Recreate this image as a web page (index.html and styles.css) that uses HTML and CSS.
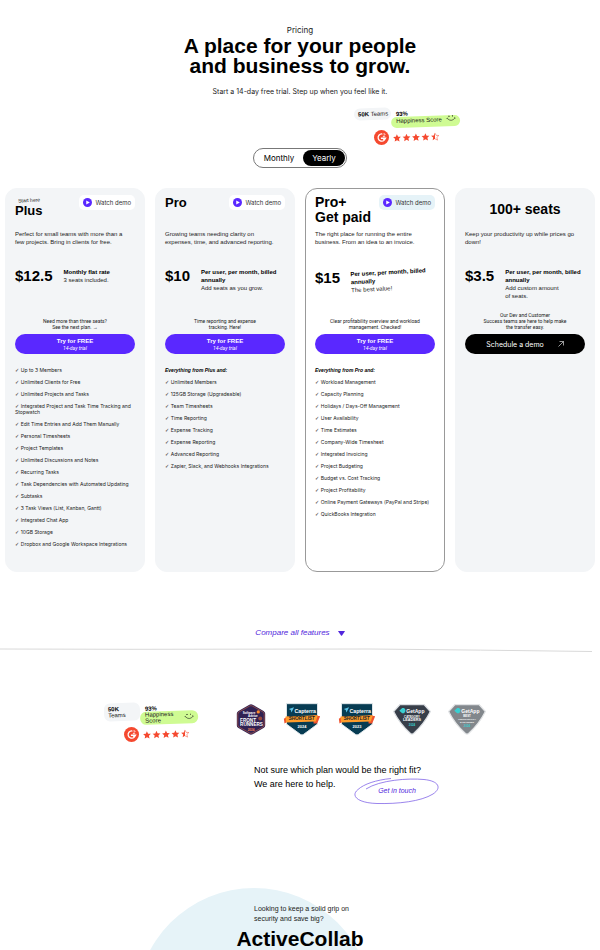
FILE: index.html
```html
<!DOCTYPE html>
<html lang="en">
<head>
  <meta charset="UTF-8">
  <meta name="viewport" content="width=device-width, initial-scale=1">
  <title>Pricing</title>
  <link rel="stylesheet" href="styles.css">
</head>
<body>

  <!-- shared icons -->
  <svg class="sprite" aria-hidden="true">
    <symbol id="play" viewBox="0 0 18 18">
      <circle cx="9" cy="9" r="9" fill="#5a28ff"/>
      <path d="M6.500 4.800v8.400L13.600 9z" fill="#fff"/>
    </symbol>
    <symbol id="g2" viewBox="0 0 30 30">
      <circle cx="15" cy="15" r="15" fill="#f5492f"/>
      <path d="M16.500 8A7.200 7.200 0 1 0 20.500 20.200L18 16.500H13.800M20.500 20.200L23 16.500H18" fill="none" stroke="#fff" stroke-width="2.600"/>
      <path d="M18.200 8.600c.6-1.800 4-1.600 3.800.4-.1 1.500-3.600 2.300-3.600 4.300h4" fill="none" stroke="#fff" stroke-width="1.500"/>
    </symbol>
    <symbol id="stars" viewBox="0 0 94 18">
      <g fill="#f5492f">
        <path id="star" d="M8 1l2.300 5 5.500.6-4.100 3.700 1.200 5.400L8 13l-4.900 2.700 1.200-5.400L.2 6.600 5.700 6z"/>
        <use href="#star" x="19"/>
        <use href="#star" x="38"/>
        <use href="#star" x="57"/>
      </g>
      <path d="M84 1v12l-4.900 2.700 1.200-5.400-4.100-3.700 5.500-.6z" fill="#f5492f"/>
      <path d="M84 1l2.300 5 5.500.6-4.100 3.700 1.200 5.400L84 13" fill="none" stroke="#f5492f" stroke-width="1"/>
    </symbol>
    <symbol id="smile" viewBox="0 0 20 14">
      <circle cx="6" cy="2" r="1.200"/>
      <circle cx="13" cy="1.500" r="1.200"/>
      <path d="M2 6q8 9 16 0M1 7l2-2M16.500 4.500l2.500 2" fill="none" stroke="#222" stroke-width="1.200"/>
    </symbol>
  </svg>

  <header class="intro">
    <p class="eyebrow">Pricing</p>
    <h1>A place for your people<br>and business to grow.</h1>
    <p class="lead">Start a 14-day free trial. Step up when you feel like it.</p>
  </header>

  <div class="score score-top">
    <div class="score-row">
      <p class="teams"><b>50K</b> Teams</p>
      <div class="happiness">
        <b>93%</b>
        <p>Happiness Score <svg class="smile"><use href="#smile"/></svg></p>
      </div>
    </div>
    <div class="rating">
      <svg class="g2"><use href="#g2"/></svg>
      <svg class="stars"><use href="#stars"/></svg>
    </div>
  </div>

  <form class="billing">
    <input type="radio" name="period" id="monthly">
    <label for="monthly">Monthly</label>
    <input type="radio" name="period" id="yearly" checked>
    <label for="yearly">Yearly</label>
  </form>

  <main class="plans">
    <section class="plan">
      <div class="plan-head">
        <div>
          <span class="start">Start here</span>
          <h2>Plus</h2>
        </div>
        <button class="watch"><svg><use href="#play"/></svg>Watch demo</button>
      </div>
      <p class="about">Perfect for small teams with more than a<br>few projects. Bring in clients for free.</p>
      <div class="price">
        <strong>$12.5</strong>
        <p><b>Monthly flat rate</b><br>3 seats included.</p>
      </div>
      <p class="note">Need more than three seats?<br>See the next plan. →</p>
      <button class="try">Try for FREE<small>14-day trial</small></button>
      <ul>
        <li>Up to 3 Members</li>
        <li>Unlimited Clients for Free</li>
        <li>Unlimited Projects and Tasks</li>
        <li>Integrated Project and Task Time Tracking and Stopwatch</li>
        <li>Edit Time Entries and Add Them Manually</li>
        <li>Personal Timesheets</li>
        <li>Project Templates</li>
        <li>Unlimited Discussions and Notes</li>
        <li>Recurring Tasks</li>
        <li>Task Dependencies with Automated Updating</li>
        <li>Subtasks</li>
        <li>3 Task Views (List, Kanban, Gantt)</li>
        <li>Integrated Chat App</li>
        <li>10GB Storage</li>
        <li>Dropbox and Google Workspace Integrations</li>
      </ul>
    </section>

    <section class="plan">
      <div class="plan-head">
        <h2>Pro</h2>
        <button class="watch"><svg><use href="#play"/></svg>Watch demo</button>
      </div>
      <p class="about">Growing teams needing clarity on<br>expenses, time, and advanced reporting.</p>
      <div class="price">
        <strong>$10</strong>
        <p><b>Per user, per month, billed annually</b><br>Add seats as you grow.</p>
      </div>
      <p class="note">Time reporting and expense<br>tracking. Here!</p>
      <button class="try">Try for FREE<small>14-day trial</small></button>
      <h3>Everything from Plus and:</h3>
      <ul>
        <li>Unlimited Members</li>
        <li>125GB Storage (Upgradeable)</li>
        <li>Team Timesheets</li>
        <li>Time Reporting</li>
        <li>Expense Tracking</li>
        <li>Expense Reporting</li>
        <li>Advanced Reporting</li>
        <li>Zapier, Slack, and Webhooks Integrations</li>
      </ul>
    </section>

    <section class="plan featured">
      <div class="plan-head">
        <h2>Pro+<br>Get paid</h2>
        <button class="watch"><svg><use href="#play"/></svg>Watch demo</button>
      </div>
      <p class="about">The right place for running the entire<br>business. From an idea to an invoice.</p>
      <div class="price">
        <strong>$15</strong>
        <p><b>Per user, per month, billed annually</b><br>The best value!</p>
      </div>
      <p class="note">Clear profitability overview and workload<br>management. Checked!</p>
      <button class="try">Try for FREE<small>14-day trial</small></button>
      <h3>Everything from Pro and:</h3>
      <ul>
        <li>Workload Management</li>
        <li>Capacity Planning</li>
        <li>Holidays / Days-Off Management</li>
        <li>User Availability</li>
        <li>Time Estimates</li>
        <li>Company-Wide Timesheet</li>
        <li>Integrated Invoicing</li>
        <li>Project Budgeting</li>
        <li>Budget vs. Cost Tracking</li>
        <li>Project Profitability</li>
        <li>Online Payment Gateways (PayPal and Stripe)</li>
        <li>QuickBooks Integration</li>
      </ul>
    </section>

    <section class="plan seats">
      <div class="plan-head">
        <h2>100+ seats</h2>
      </div>
      <p class="about">Keep your productivity up while prices go<br>down!</p>
      <div class="price">
        <strong>$3.5</strong>
        <p><b>Per user, per month, billed annually</b><br>Add custom amount<br>of seats.</p>
      </div>
      <p class="note">Our Dev and Customer<br>Success teams are here to help make<br>the transfer easy.</p>
      <button class="try demo">Schedule a demo
        <svg viewBox="0 0 12 12"><path d="M1 11L11 1M3 1h8v8" fill="none" stroke="#fff" stroke-width="1.200"/></svg>
      </button>
    </section>
  </main>

  <div class="compare">
    <a href="#">Compare all features
      <svg viewBox="0 0 14 10"><path d="M1 0h12q1 0 .5 1L8 9q-1 1-2 0L.5 1Q0 0 1 0z" fill="#5226dc"/></svg>
    </a>
  </div>
  <svg class="divider" viewBox="0 0 600 4" preserveAspectRatio="none">
    <path d="M0 1L130 1.300L370 1Q480 2 592 3.500" fill="none" stroke="#d9d9d9"/>
  </svg>

  <section class="proof">
    <div class="score">
      <div class="score-row">
        <p class="teams"><b>50K</b><br>Teams</p>
        <div class="happiness">
          <b>93%</b>
          <p><span>Happiness<br>Score</span> <svg class="smile"><use href="#smile"/></svg></p>
        </div>
      </div>
      <div class="rating">
        <svg class="g2"><use href="#g2"/></svg>
        <svg class="stars"><use href="#stars"/></svg>
      </div>
    </div>

    <div class="awards">
      <svg viewBox="0 0 90 100">
        <path d="M40 5q5-3 10 0L83 24q5 3 5 8v36q0 5-5 8L50 95q-5 3-10 0L7 76q-5-3-5-8V32q0-5 5-8z" fill="#302253"/>
        <path d="M41 9q4-2 8 0l32 18q4 2 4 7v32q0 5-4 7L49 91q-4 2-8 0L9 73q-4-2-4-7V34q0-5 4-7z" fill="none" stroke="#b8604a" stroke-width="2"/>
        <text x="20" y="32" class="w s9">Software</text>
        <text x="36" y="41" class="w s9">Advice</text>
        <circle cx="67" cy="27" r="5" fill="#ff8a2c"/>
        <circle cx="73" cy="47" r="6" fill="#9a4a3c"/>
        <text x="12" y="57" class="w s14">FRONT</text>
        <text x="12" y="70" class="w s14">RUNNERS</text>
        <text x="45" y="84" text-anchor="middle" class="s9" fill="#ff8a5c">2024</text>
      </svg>
      <svg viewBox="0 0 110 100">
        <path d="M8 2h94v62L60 95q-5 4-10 0L8 64z" fill="#073c53" stroke="#dfe6ea" stroke-width="3"/>
        <path d="M15 18l16-5-8 16-2-8z" fill="#5bc4e8"/>
        <text x="32" y="29" class="w s16">Capterra</text>
        <path d="M0 48l12-8v16L2 62zM110 40l-9 22H90V36z" fill="#f0532e"/>
        <path d="M5 41L103 37l-6 19L7 59z" fill="#ff9c2a"/>
        <text x="54" y="53" text-anchor="middle" class="i s14">SHORTLIST</text>
        <text x="55" y="76" text-anchor="middle" class="w s12">2024</text>
      </svg>
      <svg viewBox="0 0 110 100">
        <path d="M8 2h94v62L60 95q-5 4-10 0L8 64z" fill="#073c53" stroke="#dfe6ea" stroke-width="3"/>
        <path d="M15 18l16-5-8 16-2-8z" fill="#5bc4e8"/>
        <text x="32" y="29" class="w s16">Capterra</text>
        <path d="M0 48l12-8v16L2 62zM110 40l-9 22H90V36z" fill="#f0532e"/>
        <path d="M5 41L103 37l-6 19L7 59z" fill="#ff9c2a"/>
        <text x="54" y="53" text-anchor="middle" class="i s14">SHORTLIST</text>
        <text x="55" y="76" text-anchor="middle" class="w s12">2023</text>
      </svg>
      <svg viewBox="0 0 120 100">
        <path d="M22 3h76l20 22q-20 40-53 69-5 4-10 0Q22 65 2 25z" fill="#373e49" stroke="#dcdfe3" stroke-width="4"/>
        <path d="M20 22l9-8v16zM29 14h6q9 8 0 16h-6z" fill="#39cfd1"/>
        <text x="42" y="29" class="w s16">GetApp</text>
        <text x="60" y="44" text-anchor="middle" class="w s9">CATEGORY</text>
        <text x="60" y="56" text-anchor="middle" class="w s12">LEADERS</text>
        <text x="60" y="71" text-anchor="middle" class="s9" fill="#39cfd1">2024</text>
      </svg>
      <svg viewBox="0 0 120 100">
        <path d="M22 3h76l20 22q-20 40-53 69-5 4-10 0Q22 65 2 25z" fill="#82878c" stroke="#e2e4e6" stroke-width="4"/>
        <path d="M20 22l9-8v16zM29 14h6q9 8 0 16h-6z" fill="#39cfd1"/>
        <text x="42" y="29" class="w s16">GetApp</text>
        <text x="60" y="43" text-anchor="middle" class="w s9">BEST</text>
        <text x="60" y="52" text-anchor="middle" class="w s7">FUNCTIONALITY</text>
        <text x="60" y="60" text-anchor="middle" class="w s7">&amp; FEATURES</text>
        <text x="60" y="73" text-anchor="middle" class="s9" fill="#39cfd1">2024</text>
      </svg>
    </div>
  </section>

  <section class="contact">
    <p>Not sure which plan would be the right fit?<br>We are here to help.</p>
    <a href="#">
      <svg viewBox="0 0 172 54">
        <path d="M24 22C52 4 108 0 140 3c30 3 36 17 18 29-24 15-70 20-112 19C8 50-8 36 8 23 20 12 44 4 74 1" fill="none" stroke="#7a5ce6" stroke-width="1.500"/>
      </svg>
      <span>Get in touch</span>
    </a>
  </section>

  <section class="closing">
    <p>Looking to keep a solid grip on<br>security and save big?</p>
    <h2>ActiveCollab</h2>
  </section>

</body>
</html>
```
FILE: styles.css
```css
* {
  box-sizing: border-box;
}

body {
  font-family: "Liberation Sans", Arial, sans-serif;
  font-size: 6px;
  line-height: 8px;
  color: #222;
  background: #fff;
  margin: 0;
}

h1, h2, h3, p, ul {
  margin: 0;
  padding: 0;
}

h1, h2, strong {
  color: #000;
}

button {
  font: inherit;
  border: none;
  cursor: pointer;
}

svg {
  display: block;
  flex: none;
}

.sprite {
  position: absolute;
  width: 0;
  height: 0;
}

.eyebrow,
.lead,
.billing,
.watch,
.demo,
.plan ul {
  font-family: Inter, sans-serif;
}

/* intro */

.intro {
  text-align: center;
  padding-top: 25px;
}

.eyebrow {
  font-size: 8px;
  line-height: 10px;
}

h1 {
  margin-top: 1px;
  font-size: 21px;
  line-height: 20px;
}

.lead {
  font-size: 7px;
  line-height: 10px;
  margin-top: 11px;
}

/* review score */

.score {
  font-size: 6px;
  line-height: 6px;
}

.score-top {
  width: 106px;
  margin: 11px 0 0 59%;
}

.score-row {
  display: flex;
  align-items: flex-start;
}

.teams {
  padding: 3px 3px 3px 4px;
  border-radius: 6px;
  background: #f3f5f7;
  transform: rotate(-2deg);
}

.score b {
  color: #000;
}

.happiness {
  flex: 1;
  padding-top: 2px;
  transform: rotate(-2deg);
}

.happiness b {
  padding-left: 5px;
}

.happiness p {
  display: flex;
  justify-content: space-between;
  align-items: center;
  padding: 0 4px 1px 5px;
  border-radius: 6px;
  background: #cffb93;
}

.score-top .happiness p {
  padding-bottom: 4px;
}

.smile {
  width: 10px;
  height: 7px;
}

.rating {
  display: flex;
  align-items: center;
  gap: 4px;
  margin: 3px 0 0 20px;
}

.g2 {
  width: 15px;
  height: 15px;
}

.stars {
  width: 47px;
  height: 9px;
  transform: rotate(-2deg);
}

/* billing switch */

.billing {
  display: flex;
  width: 94px;
  margin: 3px auto 20px;
  padding: 1px;
  border: 1px solid #777;
  border-radius: 10px;
  font-size: 8px;
  line-height: 16px;
  color: #000;
}

.billing input {
  position: absolute;
  opacity: 0;
}

.billing label {
  flex: 1 0 auto;
  border-radius: 8px;
  text-align: center;
  cursor: pointer;
}

.billing input:checked + label {
  flex: 0 0 42px;
  background: #000;
  color: #fff;
}

/* plans */

.plans {
  display: grid;
  grid-template-columns: repeat(4, 1fr);
  gap: 10px;
  padding: 0 5px;
}

.plan {
  padding: 6px 9px 24px;
  border: 1px solid #f3f5f7;
  border-radius: 12px;
  background: #f3f5f7;
}

.featured {
  border-color: #999;
  background: #fff;
}

.plan-head {
  display: flex;
  justify-content: space-between;
  align-items: flex-start;
  height: 35px;
}

.plan h2 {
  font-size: 13px;
  line-height: 15px;
}

.plan.featured h2,
.plan.seats h2 {
  font-size: 14px;
}

.seats .plan-head {
  justify-content: center;
  padding-top: 7px;
}

.start {
  display: block;
  padding: 2px 0 0 3px;
  font-size: 5px;
  line-height: 6px;
  transform: rotate(-3deg);
}

.watch {
  display: flex;
  align-items: center;
  gap: 3px;
  padding: 3px 4px;
  border-radius: 5px;
  background: #fff;
  color: #333;
  line-height: 9px;
}

.featured .watch {
  background: #e6f3f8;
}

.watch svg {
  width: 9px;
  height: 9px;
}

.price {
  display: flex;
  gap: 11px;
  min-height: 34px;
  margin-top: 22px;
}

.price strong {
  font-size: 15px;
  line-height: 16px;
}

.price b {
  color: #000;
}

.price p {
  margin-right: -4px;
}

.featured .price strong {
  line-height: 20px;
}

.featured .price p {
  transform: rotate(-3deg);
}

.note {
  display: flex;
  flex-direction: column;
  justify-content: flex-end;
  min-height: 28px;
  font-family: Roboto, sans-serif;
  font-size: 5px;
  line-height: 6px;
  text-align: center;
}

.try {
  display: block;
  width: 100%;
  height: 20px;
  margin: 4px 0 13px;
  padding: 0;
  border-radius: 10px;
  background: #5a28ff;
  color: #fff;
  font-weight: bold;
  line-height: 7px;
}

.try small {
  display: block;
  font: italic 5px/6px Roboto, sans-serif;
}

.demo {
  display: flex;
  justify-content: center;
  align-items: center;
  gap: 14px;
  background: #000;
  font-size: 7px;
  font-weight: normal;
}

.demo svg {
  width: 6px;
  height: 6px;
}

.plan h3 {
  margin-bottom: 6px;
  color: #000;
  font-size: 5px;
  font-style: italic;
  line-height: 6px;
}

.plan ul {
  display: flex;
  flex-direction: column;
  gap: 6px;
  list-style: none;
  font-size: 5px;
  line-height: 6px;
}

.plan li::before {
  content: "✓ ";
  font-family: "DejaVu Sans", sans-serif;
  line-height: 1px;
}

/* compare link */

.compare {
  display: flex;
  justify-content: center;
  padding: 56px 0 10px;
}

.compare a {
  display: flex;
  align-items: center;
  gap: 8px;
  color: #5226dc;
  font-size: 8px;
  font-style: italic;
  line-height: 10px;
  text-decoration: none;
}

.compare svg {
  width: 7px;
  height: 5px;
}

.divider {
  width: 100%;
  height: 4px;
}

/* awards */

.proof {
  display: flex;
  align-items: flex-start;
  gap: 38px;
  padding: 51px 0 0 17%;
}

.proof .score {
  width: 96px;
  padding-left: 2px;
}

.proof .teams {
  padding-right: 14px;
}

.awards {
  display: flex;
  gap: 17px;
}

.awards svg {
  width: 38px;
  height: 33px;
}

.awards svg:first-child {
  width: 30px;
}

.awards text {
  font-family: "Liberation Sans", Arial, sans-serif;
  font-weight: bold;
}

.w { fill: #fff; }
.i { fill: #222; font-style: italic; }
.s7 { font-size: 7px; }
.s9 { font-size: 9px; }
.s12 { font-size: 12px; }
.s14 { font-size: 14px; }
.s16 { font-size: 16px; }

/* contact */

.contact {
  position: relative;
  margin: 21px 0 0 254px;
  color: #000;
  font-size: 9px;
  line-height: 14px;
}

.contact a {
  position: absolute;
  top: 15px;
  left: 100px;
  width: 86px;
  color: #5226dc;
  font-size: 7px;
  font-style: italic;
  text-align: center;
  text-decoration: none;
}

.contact svg {
  width: 86px;
  height: 27px;
}

.contact span {
  position: absolute;
  inset: 6px 0 auto;
}

/* closing */

.closing {
  position: relative;
  margin-top: 97px;
  padding-top: 16px;
  overflow: hidden;
  text-align: center;
}

.closing::before {
  content: "";
  position: absolute;
  top: 0;
  left: 50%;
  z-index: -1;
  width: 236px;
  height: 236px;
  margin-left: -164px;
  border-radius: 50%;
  background: #e6f3f8;
}

.closing p {
  width: 92px;
  margin: 0 auto;
  font-size: 7px;
  line-height: 10px;
  text-align: left;
  white-space: nowrap;
}

.closing h2 {
  margin-top: 4px;
  font-size: 21px;
  line-height: 22px;
}
```
